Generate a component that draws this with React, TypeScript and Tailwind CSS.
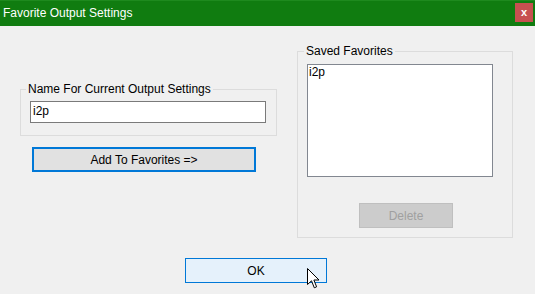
import React from "react";

const font = { fontFamily: '"Liberation Sans", Arial, sans-serif' };

function Cursor() {
  return (
    <svg className="absolute left-[307px] top-[268px]" width="13" height="22" viewBox="0 0 13 22">
      <path d="M0.5 0.5 L0.5 16.5 L4.5 12.8 L7.3 19.8 L9.6 18.8 L6.9 12 L12 12 Z" fill="#fff" stroke="#000" strokeWidth="1" strokeLinejoin="miter" />
    </svg>
  );
}

export default function App() {
  return (
    <div className="relative w-[535px] h-[294px] bg-[#f0f0f0] flex flex-col overflow-hidden text-[12px] text-black" style={font}>
      <div className="h-[26px] bg-[#107c10] border-t border-[#1e8a1e] flex items-start justify-between pl-[3px] pr-[2px]">
        <span className="text-white text-[12px] leading-[24px]">Favorite Output Settings</span>
        <div className="mt-[2px] w-[18px] h-[19px] bg-[#c75050] flex items-center justify-center text-white font-bold text-[11px] leading-none">x</div>
      </div>

      <div className="flex flex-col">
        <div className="flex items-start">
          <div className="ml-[20px] mt-[56px] w-[257px] flex flex-col">
            <fieldset className="border border-[#dcdcdc] pl-[9px] pt-[5px] pb-[12px]">
              <legend className="-ml-[4px] px-[2px] h-[14px] leading-[14px]">Name For Current Output Settings</legend>
              <div className="w-[236px] h-[22px] bg-white border border-[#7a7a7a] pl-[2px] leading-[18px]">i2p</div>
            </fieldset>
            <button className="mt-[11px] ml-[12px] w-[224px] h-[25px] bg-[#e1e1e1] border-2 border-[#0078d7] text-[12px]">
              Add To Favorites =&gt;
            </button>
          </div>

          <div className="ml-[20px] mt-[18px] w-[216px]">
            <fieldset className="border border-[#dcdcdc] pl-[9px] pt-[6px] pb-[9px]">
              <legend className="-ml-[3px] px-[2px] h-[14px] leading-[14px]">Saved Favorites</legend>
              <div className="w-[186px] h-[113px] bg-white border border-[#828790] pl-[1px] leading-[14px]">i2p</div>
              <button className="mt-[26px] ml-[52px] w-[94px] h-[25px] bg-[#cccccc] border border-[#bfbfbf] text-[#a0a0a0] text-[12px]">
                Delete
              </button>
            </fieldset>
          </div>
        </div>

        <button className="mt-[20px] ml-[185px] w-[142px] h-[25px] bg-[#e5f1fb] border border-[#0078d7] text-[12px]">
          OK
        </button>
      </div>

      <Cursor />
    </div>
  );
}
